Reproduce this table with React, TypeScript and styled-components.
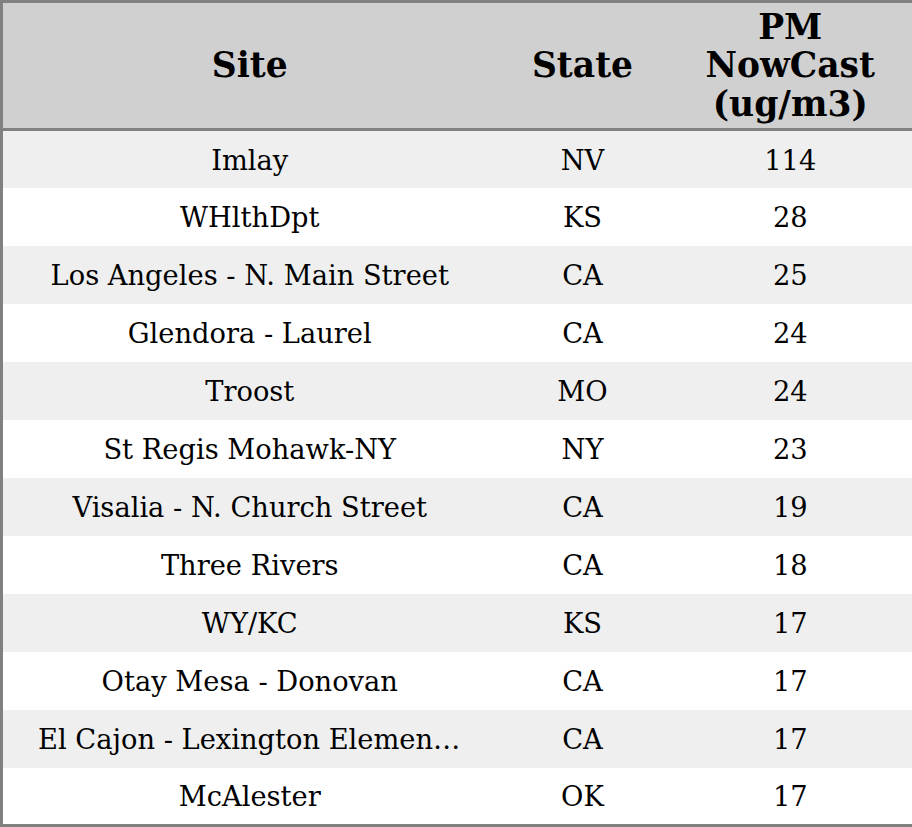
import * as React from 'react';
import styled, { createGlobalStyle } from 'styled-components';

interface IRow {
  site: string;
  state: string;
  value: number;
}

const rows: IRow[] = [
  { site: 'Imlay', state: 'NV', value: 114 },
  { site: 'WHlthDpt', state: 'KS', value: 28 },
  { site: 'Los Angeles - N. Main Street', state: 'CA', value: 25 },
  { site: 'Glendora - Laurel', state: 'CA', value: 24 },
  { site: 'Troost', state: 'MO', value: 24 },
  { site: 'St Regis Mohawk-NY', state: 'NY', value: 23 },
  { site: 'Visalia - N. Church Street', state: 'CA', value: 19 },
  { site: 'Three Rivers', state: 'CA', value: 18 },
  { site: 'WY/KC', state: 'KS', value: 17 },
  { site: 'Otay Mesa - Donovan', state: 'CA', value: 17 },
  { site: 'El Cajon - Lexington Elementary School', state: 'CA', value: 17 },
  { site: 'McAlester', state: 'OK', value: 17 },
];

const GlobalStyle = createGlobalStyle`
  html, body {
    margin: 0;
    padding: 0;
    background: #fff;
  }
  body {
    font-family: 'DejaVu Serif', serif;
  }
`;

const Table = styled.table`
  width: 912px;
  table-layout: fixed;
  border-collapse: collapse;
  border: 3px solid #808080;
  color: #000;
`;

const Col = styled.col<{ $width: number }>`
  width: ${(p) => p.$width}px;
`;

const HeadRow = styled.tr`
  height: 128px;
  background: #d0d0d0;
  border-bottom: 3px solid #808080;
`;

const HeadCell = styled.th`
  padding: 0 8px;
  font-size: 34.5px;
  font-weight: bold;
  line-height: 38.5px;
  text-align: center;
  vertical-align: middle;
`;

const BodyRow = styled.tr<{ $odd: boolean }>`
  height: 58px;
  background: ${(p) => (p.$odd ? '#efefef' : '#ffffff')};
`;

const Cell = styled.td`
  padding: 2px 35px 0;
  font-size: 27.3px;
  text-align: center;
  vertical-align: middle;
  white-space: nowrap;
  overflow: hidden;
  text-overflow: ellipsis;
`;

const App = () => (
  <>
    <GlobalStyle />
    <Table>
      <colgroup>
        <Col $width={495} />
        <Col $width={172} />
        <Col $width={245} />
      </colgroup>
      <thead>
        <HeadRow>
          <HeadCell>Site</HeadCell>
          <HeadCell>State</HeadCell>
          <HeadCell>PM NowCast (ug/m3)</HeadCell>
        </HeadRow>
      </thead>
      <tbody>
        {rows.map((row, i) => (
          <BodyRow key={row.site} $odd={i % 2 === 0}>
            <Cell>{row.site}</Cell>
            <Cell>{row.state}</Cell>
            <Cell>{row.value}</Cell>
          </BodyRow>
        ))}
      </tbody>
    </Table>
  </>
);

export default App;
